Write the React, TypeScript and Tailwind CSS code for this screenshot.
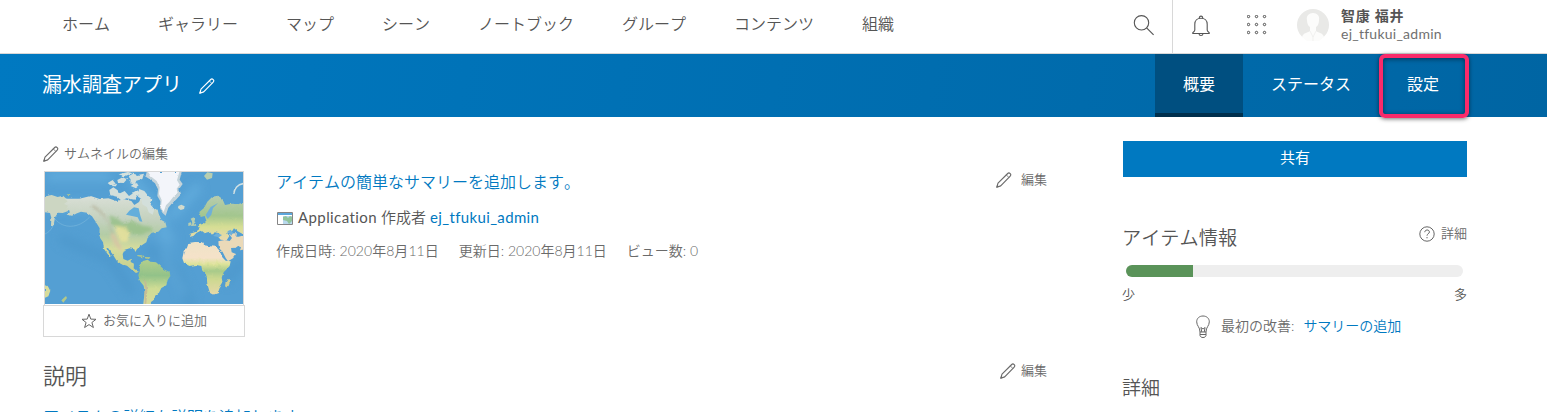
import React from "react";

const NAV = ["ホーム", "ギャラリー", "マップ", "シーン", "ノートブック", "グループ", "コンテンツ", "組織"];

function Pencil({ className = "" }: { className?: string }) {
  return (
    <svg viewBox="0 0 16 16" className={`h-4 w-4 shrink-0 ${className}`} fill="none" stroke="currentColor" strokeWidth="1.15" strokeLinejoin="round">
      <path d="M.8 15.200 2 11.200 11.700 1.500c.8-.8 1.700-.7 2.500.1s.8 1.700 0 2.500L4.700 13.900Z" />
      <path d="M10.300 2.900 12.900 5.500" strokeWidth=".8" />
      <path d="m.8 15.200.6-1.900 1.300 1.200Z" fill="currentColor" strokeWidth=".6" />
    </svg>
  );
}

function SearchIcon() {
  return (
    <svg viewBox="0 0 22 22" className="-ml-px h-[22px] w-[22px]" fill="none" stroke="#555" strokeWidth="1.1">
      <circle cx="8.500" cy="7.800" r="7.200" />
      <path d="m13.600 12.900 7 7" />
    </svg>
  );
}

function BellIcon() {
  return (
    <svg viewBox="0 0 20 22" className="h-[22px] w-5" fill="none" stroke="#555" strokeWidth="1.100">
      <path d="M1.500 18.500h17M1.500 18.500c0-1.700 2.300-1.300 2.300-3.500V9.200c0-3.500 2.400-6 6.200-6s6.200 2.500 6.200 6V15c0 2.200 2.300 1.800 2.300 3.500" />
      <path d="M8.400 3.300c-.7-2.900 3.900-2.900 3.200 0M8 18.700c.2 2.400 3.800 2.400 4 0" />
    </svg>
  );
}

function AppsIcon() {
  return (
    <svg viewBox="0 0 20 20" className="h-5 w-5" fill="none" stroke="#444" strokeWidth=".95">
      {[1.5, 9.5, 17.5].map((y) => [1.5, 9.5, 17.5].map((x) => <circle key={`${x}-${y}`} cx={x} cy={y} r="1.200" />))}
    </svg>
  );
}

function Avatar() {
  return (
    <svg viewBox="0 0 32 32" className="h-8 w-8">
      <circle cx="16" cy="16" r="16" fill="#e9e9e7" />
      <path d="M5 28c1-4 5-4 8-6l0-4c-2-1-3-4-3-7-1-4 2-7 6-7s7 3 6 7c0 3-1 6-3 7v4c3 2 7 2 8 6l-5 4H10Z" fill="#fcfcfb" />
      <path d="m13 22 3 6 3-6M16 28v4" fill="none" stroke="#e9e9e7" strokeWidth=".6" />
    </svg>
  );
}

function Bulb() {
  return (
    <svg viewBox="0 0 14 24" className="h-6 w-3.5" fill="none" stroke="#666" strokeWidth="1">
      <path d="M4 17c0-5-3.300-6-3.300-10.200C.7 3.200 3.500 1 7 1s6.300 2.200 6.300 5.800C13.300 11 10 12 10 17Z" />
      <path d="M4 17v3.500C4.500 23.200 9.500 23.200 10 20.500V17M4 19.500h6M5.800 17l-.9-4.500M8.200 17l.9-4.500M4.900 12.500 7 14l2.100-1.500" />
    </svg>
  );
}

function WorldMap() {
  return (
    <svg viewBox="44 97 594 396" preserveAspectRatio="none" className="block h-[132px] w-[198px]">
      <defs>
        <linearGradient id="na" x1="0" y1="0" x2="0" y2="1">
          <stop offset="0" stopColor="#d9dfd6" />
          <stop offset=".32" stopColor="#c3d1bd" />
          <stop offset=".5" stopColor="#b3cca6" />
          <stop offset=".68" stopColor="#d5dc9c" />
          <stop offset="1" stopColor="#c5cf8c" />
        </linearGradient>
        <linearGradient id="sa" x1="0" y1="0" x2="0" y2="1">
          <stop offset="0" stopColor="#b3cf8c" />
          <stop offset=".3" stopColor="#92c289" />
          <stop offset=".55" stopColor="#cfdc94" />
          <stop offset="1" stopColor="#dcd9a0" />
        </linearGradient>
        <linearGradient id="af" x1="0" y1="0" x2="0" y2="1">
          <stop offset="0" stopColor="#efe3c6" />
          <stop offset=".3" stopColor="#f5e2c9" />
          <stop offset=".42" stopColor="#dde39a" />
          <stop offset=".55" stopColor="#a8ca8a" />
          <stop offset=".7" stopColor="#ccd890" />
          <stop offset="1" stopColor="#e6d8a8" />
        </linearGradient>
        <linearGradient id="eu" x1="0" y1="0" x2="0" y2="1">
          <stop offset="0" stopColor="#b9cdb0" />
          <stop offset=".45" stopColor="#a3c68e" />
          <stop offset=".7" stopColor="#d6de94" />
          <stop offset="1" stopColor="#e9d9ae" />
        </linearGradient>
        <filter id="soft" x="-50%" y="-50%" width="200%" height="200%">
          <feGaussianBlur stdDeviation="14" />
        </filter>
        <filter id="tint" x="-20%" y="-20%" width="140%" height="140%">
          <feGaussianBlur stdDeviation="5" />
        </filter>
        <filter id="edge" x="-5%" y="-5%" width="110%" height="110%">
          <feTurbulence type="fractalNoise" baseFrequency=".07" numOctaves="2" seed="4" result="n" />
          <feDisplacementMap in="SourceGraphic" in2="n" scale="8" xChannelSelector="R" yChannelSelector="G" />
        </filter>
      </defs>
      <path d="M44 97h594v396H44z" fill="#549fd3" />
      <g filter="url(#soft)" fill="none" strokeLinecap="round" opacity=".6">
        <path d="M60 110h170M300 110l90 110 20 80M430 225l70-80M44 195l130 10" stroke="#6bb6e4" strokeWidth="26" />
        <path d="M100 300l140 60 60 90M360 330l80 70 40 90M590 420l40-50" stroke="#4b96ca" strokeWidth="34" />
        <path d="M430 290l-30 60 60 110M345 270l50 30" stroke="#62aadb" strokeWidth="16" />
      </g>
      <path d="M44 283c22-10 25-27 30-45 25 30 70 30 104-6" fill="none" stroke="#79b6dc" strokeWidth="2" />
      <g filter="url(#edge)">
        <path d="m44 170 20-4 18 6 16-4 10 9 15 4 12 17-17 4-6 13-15 5-14-1-9 14-5 24-7 3 1-26-4-14-15-2Z" fill="#ccd6c2" />
        <path d="m147 177 34-8 27 9 26-2 24 8 24-5 21 5 9 12 14-9 6-12 18 5 4 15 14 15 13-4 4 16 8 19 12 7 4 15-15 3-10 10-20 3-11 12-5 17-16 10-12 10-5 9-3-8-14-3-15 4-6 13 2 15 13 5 10-5-1 9 10 5-1 14 10 8 6 2-9 4-13-10-14-12-18-5-14-11-10-17-15-20-5 1 13 22-4 2-16-22-3-20-11-17 1-25-12-20-11-16-15-11-18-3-12 5-15 7-16-3 10-11-11-7 5-9-12-5 11-8-9-8Z" fill="url(#na)" />
        <g filter="url(#tint)">
          <path d="m236 226 24 9 17 14 28-6 33 15 22 3 8 12-22 6-20 7-30-6-32-13-20-12Z" fill="#96bf87" opacity=".8" />
          <path d="m186 194 22 14 16 19 15 28 10 28 12 24 14 20-14-5-14-26-9-33-12-26-21-21-20-11Z" fill="#b0ab93" opacity=".6" />
          <path d="m252 258 34 4 12 20-7 24-18 1-14-22Z" fill="#ece49a" opacity=".8" />
          <path d="m238 282 14-2 14 26 12 26-10 2-18-22Z" fill="#dfc9a6" opacity=".7" />
        </g>
        <path d="m237 151 12-8 12 8 8 10 14-7 13 15 18-12 8 9-9 14-25-4-14 7-14-12-20-4Zm-5-21 15-9 9 11-14 7Zm29-9 16-8 13 6-10 11-17-1Zm33-11 14-8 15 4 18-4-5 16-18 5-5 12-13-4 1-12Zm7 29 14-8 13 6-11 9Zm25 9 16 6 12 15 12 8-5 18 11 13-5 17-12-7-5-15-14-9-2-16-11-7Z" fill="#d3dfdb" />
        <path d="m265 104 28-7 14 4-24 9Zm-25 35 20-7-3 8ZM305 160l15-8 11 8-13 9Z" fill="#d6e2dd" />
        <path d="M346 97h108l-6 23 9 13-10 14 5 17-15 16-13 12-10 12-8 24-10-9-7-14 1-20-9-16 2-20-9-18-18-14-13-8Z" fill="#c4d3d9" />
        <path d="M353 97h94l-7 25 8 13-9 12 3 13-14 13-11 14-10 10-7 20-8-13 2-23-8-18 2-20-9-19-16-13Z" fill="#f3f5fa" />
        <path d="m444 199 9-4 10 5-2 8-10 3-8-6Z" fill="#d3dbcc" />
        <path d="m338 364 14-4 8 6 17 2 13 11 10 10 18 8 2 12-8 12-4 16-15 8-7 14-10 7-5 14-9 7-2 11-8 8-1 12h-10l-3-14 2-21 3-27-3-18-11-13-5-18 5-15-3-14Z" fill="url(#sa)" />
        <path d="m340 415 8 13 3 24-3 39-5 3-1-29 1-32Z" fill="#c4b797" opacity=".8" />
        <path d="m475 310 19-3 25 1 2 9 20 3 16 1 11 12 8 20 10 10 15 2-3 14-18 19-6 16 3 17-10 16-4 13-14 5-10-5-8-26-2-24-7-13-7-8-2-10-15-3-21 3-16-9-5-14 4-19 10-13Z" fill="url(#af)" />
        <path d="m592 418 7 2-3 17-6 7-6-4 2-12Z" fill="#d0cf94" />
        <path d="m479 282 17-5 12-10-6-9 14-5 12-10-5-14-12 3-4-15 14-12 10-19 15-15 17-3 13 9 8 19 20-4 19 2 25-9v104l-26-14-11-9-8 12-13 1 7 10-8 13-18-2-7-8 3-11-14-3-7 9-8-11-17 5-10-8-13 7-9 9-13 3Z" fill="url(#eu)" />
        <path d="m564 305 19-4 15 3 7-9-9-12 17-2 9 11 26-7v43l-19 4 3-9-9-4-7 5-14 1 2 13 13 5-9 13-15 9-7-10-9-18-11-12Z" fill="#ead9b8" />
        <path d="m481 237 9-4 5 16 3 9-16 1 4-12Zm-7 13 9-3-1 10-8 2ZM521 109l10-11 16 3-2 14-15 5Z" fill="#b7ceb0" />
        <path d="M638 132c-15 2-26 14-28 31" fill="none" stroke="#d1e1e4" strokeWidth="5" />
        <path d="m44 435 8 4 8 14-6 17-10 4Z" fill="#d7dc9b" />
        <path d="m321 346 13 1 10 5-8 1-15-4Zm26 6 13 1-4 5-9-2ZM93 482l14-13 3 6-11 14ZM109 163l12 2-6 5Z" fill="#b3c889" />
      </g>
      <path d="m541 202-15 24 6 12 11-13 5-20 15-15M591 275l10-5 7 9-5 9M549 289l11-9 15 6-9 7Z" fill="#6fb0d9" />
      <path d="m287 225 10-12 14-10 14 3 5 22 6 18-8-1-6-12-17-4Z" fill="#64aedb" />
    </svg>
  );
}

function Edit({ gap = "ml-[9px]" }: { gap?: string }) {
  return (
    <div className="-ml-px flex h-5 items-center text-[13px] text-[#6a6a6a]">
      <Pencil />
      <span className={gap}>編集</span>
    </div>
  );
}

export default function App() {
  return (
    <div className="h-[412px] w-[1547px] overflow-hidden bg-white font-['Lato','Noto_Sans_CJK_JP',sans-serif] font-[350] text-[#555] [font-kerning:none]">
      <header className="flex h-[54px] border-b border-[#d8d8d8]">
        <nav className="flex h-12 w-[1134px] items-center gap-12 pl-[62px] text-base">
          {NAV.map((n) => (
            <a key={n} className="whitespace-nowrap">{n}</a>
          ))}
        </nav>
        <div className="flex w-[39px] border-r border-[#d8d8d8] pt-[15px]">
          <SearchIcon />
        </div>
        <div className="pt-[15px] pl-[18px]">
          <BellIcon />
        </div>
        <div className="pt-[15px] pl-[36px]">
          <AppsIcon />
        </div>
        <div className="pt-[9px] pl-[30px]">
          <Avatar />
        </div>
        <div className="pt-[7px] pl-3 leading-[18px]">
          <div className="text-[14px] font-bold tracking-[.8px]">智康 福井</div>
          <div className="text-[14px] font-normal tracking-[.25px] text-[#707070]">ej_tfukui_admin</div>
        </div>
      </header>

      <div className="flex h-[63px] bg-[linear-gradient(100deg,#0079c1,#0065a3)] pl-[42px] text-white">
        <div className="flex w-[1113px] items-center pb-[3px] text-[20px] font-normal">
          <h1>漏水調査アプリ</h1>
          <Pencil className="mt-1 ml-[17px]" />
        </div>
        <div className="flex text-base font-normal leading-[60px]">
          <a className="border-b-4 border-[#00304d] bg-[#004f80] px-7">概要</a>
          <a className="px-7">ステータス</a>
          <div className="relative px-7">
            設定
            <div className="absolute top-0 left-0 h-[64px] w-[90px] rounded-md border-4 border-[#fa2a6a] shadow-[0_1px_4px_rgba(0,0,0,.55),inset_0_1px_5px_rgba(0,0,0,.5)]" />
          </div>
        </div>
      </div>

      <main className="flex pl-[43px]">
        <section className="w-[1004px] pt-[27px]">
          <div className="flex h-[165px]">
            <div className="flex h-[193px] w-[202px] flex-col">
              <div className="flex h-[27px] items-start text-[13px] leading-[19px] text-[#6a6a6a]">
                <Pencil className="mt-0.5" />
                <span className="ml-[5px] whitespace-nowrap">サムネイルの編集</span>
              </div>
              <div className="mx-px h-[134px] border border-b-0 border-[#d8d8d8]">
                <WorldMap />
              </div>
              <div className="flex h-8 items-center border border-[#d8d8d8] pl-[37px] text-[13px] text-[#6a6a6a]">
                <svg viewBox="0 0 16 16" className="h-4 w-4" fill="none" stroke="#666" strokeWidth="1">
                  <path d="m8 1.200 1.800 4.900 5.200.2-4.100 3.200 1.500 5L8 11.600l-4.400 2.900 1.500-5L1 6.300l5.200-.2Z" />
                </svg>
                <span className="ml-[6px]">お気に入りに追加</span>
              </div>
            </div>
            <div className="ml-[31px] flex-1 pt-[26px]">
              <a className="block text-base leading-6 text-[#0079c1]">アイテムの簡単なサマリーを追加します。</a>
              <div className="mt-[11px] flex h-6 items-center text-[15px]">
                <svg viewBox="0 0 16 13" className="mt-0.5 mr-[5px] ml-px h-[13px] w-4">
                  <path d="M.5.500h15v12H.5Z" fill="#fff" stroke="#858585" />
                  <path d="M1 1h14v2H1Z" fill="#5ca7dc" />
                  <path d="M6 4h9v8H6Z" fill="#b9d9ed" />
                  <path d="m6 5 3-1 2 2 2-2 2 1v4l-3 3-2-3-4-1Z" fill="#91c39b" />
                </svg>
                <span className="mr-1 font-normal tracking-[.4px]">Application</span>
                <span className="mr-1">作成者</span>
                <a className="font-normal tracking-[.35px] text-[#0079c1]">ej_tfukui_admin</a>
              </div>
              <div className="mt-[9px] flex h-6 items-center gap-5 text-[14px] text-[#6a6a6a]">
                <span className="tracking-[.05px]">作成日時: 2020年8月11日</span>
                <span>更新日: 2020年8月11日</span>
                <span>ビュー数: 0</span>
              </div>
            </div>
            <div className="pt-[26px]">
              <Edit />
            </div>
          </div>
          <div className="mt-[50px] flex h-8 justify-between">
            <h2 className="pt-px text-[22px] leading-8">説明</h2>
            <div className="pt-0.5">
              <Edit gap="ml-[5px]" />
            </div>
          </div>
          <a className="mt-[14px] block text-base leading-6 text-[#0079c1]">アイテムの詳細な説明を追加します。</a>
        </section>

        <aside className="ml-[76px] w-[344px] pt-6">
          <button className="block h-9 w-full bg-[#0079c1] pb-[3px] text-[15px] leading-[33px] font-normal text-white">共有</button>
          <div className="mt-[45px] flex h-8 justify-between">
            <h2 className="-ml-px text-[19.2px] leading-8">アイテム情報</h2>
            <div className="flex h-6 items-center text-[13px] text-[#6a6a6a]">
              <svg viewBox="0 0 16 16" className="mr-1.5 h-4 w-4" fill="none" stroke="#666" strokeWidth="1">
                <circle cx="8" cy="8" r="7.200" />
                <path d="M5.800 6.200c0-3 4.600-2.900 4.600-.2C10.400 7.900 8 7.600 8 9.700M8 11v1.300" />
              </svg>
              詳細
            </div>
          </div>
          <div className="mt-[11px] ml-[3px] h-3 w-[337px] overflow-hidden rounded-full bg-[#eee]">
            <div className="h-full w-[67px] bg-[#5a9359]" />
          </div>
          <div className="mt-[7px] flex justify-between text-[13px] leading-5">
            <span className="-ml-px">少</span>
            <span>多</span>
          </div>
          <div className="mt-[11px] ml-[73px] flex h-6 items-center text-[14px] leading-5 text-[#6a6a6a]">
            <Bulb />
            <span className="ml-[11px] pb-0.5">最初の改善:</span>
            <a className="ml-[9px] pb-0.5 text-[#0079c1]">サマリーの追加</a>
          </div>
          <h2 className="-ml-px mt-[33px] text-[19px] leading-8">詳細</h2>
        </aside>
      </main>
    </div>
  );
}
